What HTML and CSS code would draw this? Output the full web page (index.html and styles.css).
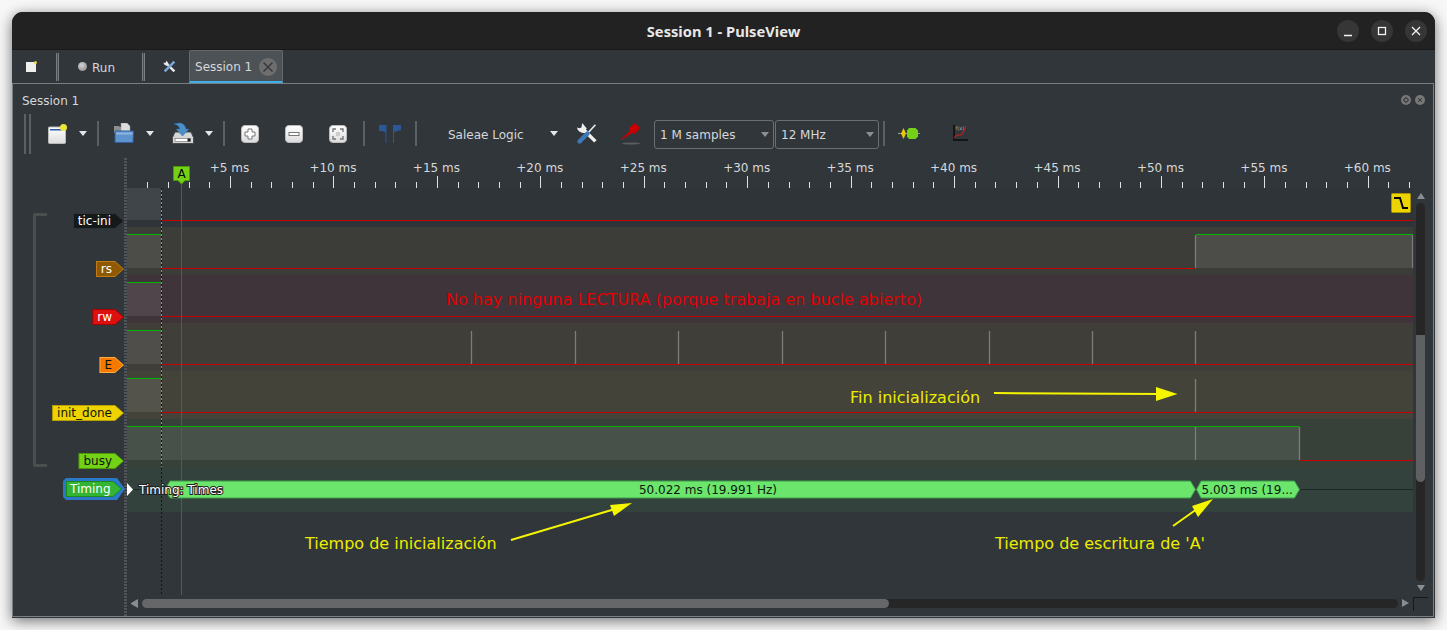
FILE: index.html
```html
<!DOCTYPE html>
<html lang="en">
<head>
<meta charset="utf-8">
<title>Session 1 - PulseView</title>
<link rel="stylesheet" href="styles.css">
</head>
<body>
<div class="window">
  <header class="titlebar">
    <h1 class="title">Session 1 - PulseView</h1>
    <div class="wm">
      <span class="wm-btn"><svg viewBox="0 0 22 22" width="22" height="22"><path d="M7 15.500h8" class="wm-ic"/></svg></span>
      <span class="wm-btn"><svg viewBox="0 0 22 22" width="22" height="22"><rect x="7.500" y="7.500" width="7" height="7" class="wm-ic"/></svg></span>
      <span class="wm-btn"><svg viewBox="0 0 22 22" width="22" height="22"><path d="M7 7l8 8M15 7l-8 8" class="wm-ic"/></svg></span>
    </div>
  </header>

  <nav class="tabbar">
    <svg class="t-stop" viewBox="0 0 11 11" width="11" height="11"><rect x="0" y="1" width="10" height="10" fill="#eeeeec"/><circle cx="9.500" cy="1.500" r="1.500" fill="#e9d84a"/></svg>
    <span class="handle t-h1"></span>
    <span class="run-dot"></span>
    <span class="run-label">Run</span>
    <span class="handle t-h2"></span>
    <svg class="t-tool" viewBox="0 0 24 24" width="13" height="13"><path d="M6 6L21 21" stroke="#e6e8ea" stroke-width="4.500" fill="none"/><path d="M1 5a6 6 0 0 0 8 5l1-4-4-5-1 4z" fill="#e6e8ea"/><path d="M21 3L3 21" stroke="#7aa7d8" stroke-width="4.500" fill="none"/></svg>
    <div class="tab">
      <span>Session 1</span>
      <svg class="tab-x" viewBox="0 0 18 18" width="18" height="18"><circle cx="9" cy="9" r="9" fill="#6e6e6e"/><path d="M4.500 4.500l9 9M13.500 4.500l-9 9" stroke="#34383c" stroke-width="1.500"/></svg>
    </div>
  </nav>

  <section class="dock">
    <div class="dock-title">
      <span>Session 1</span>
      <span class="dock-btns">
        <svg viewBox="0 0 10 10" width="10" height="10"><circle cx="5" cy="5" r="5" fill="#777"/><rect x="3.200" y="3.200" width="3.600" height="3.600" transform="rotate(45 5 5)" fill="none" stroke="#31363b"/></svg>
        <svg viewBox="0 0 10 10" width="10" height="10"><circle cx="5" cy="5" r="5" fill="#777"/><path d="M3 3l4 4M7 3l-4 4" stroke="#31363b"/></svg>
      </span>
    </div>

    <div class="toolbar">
      <span class="grip"></span>
      <svg class="i-new" viewBox="0 0 19 20" width="19" height="20"><defs><linearGradient id="pg" x1="0" y1="0" x2="0" y2="1"><stop offset="0" stop-color="#ffffff"/><stop offset="1" stop-color="#dcdcdc"/></linearGradient></defs><rect x="0.500" y="3" width="17" height="16.500" rx="1" fill="url(#pg)" stroke="#b9b9b9"/><rect x="2" y="5" width="12" height="1.500" fill="#2d5a9c"/><circle cx="15.500" cy="3.500" r="3.500" fill="#ece63a"/></svg>
      <span class="caret c1"></span>
      <span class="sep s1"></span>
      <svg class="i-open" viewBox="0 0 20 20" width="20" height="20"><path d="M0 3h5l1 1h8v6H0z" fill="#8c8f90"/><path d="M7 0h6l3 3v7H7z" fill="#dcdcdc" stroke="#999" stroke-width=".5"/><path d="M1 8h18.500l-.5 11.500H1z" fill="#5f93ce" stroke="#2d5f9e"/><path d="M2 9.500h16.500v2H2z" fill="#8db5e0"/></svg>
      <span class="caret c2"></span>
      <svg class="i-save" viewBox="0 0 22 22" width="22" height="22"><path d="M3 10h16l2.500 5.500v6H.5v-6z" fill="#d5d6d6" stroke="#4a4a4a"/><rect x="3" y="16.500" width="15.500" height="3" fill="#fff" stroke="#666" stroke-width=".6"/><rect x="15.500" y="16.500" width="3" height="3" fill="#222"/><path d="M2 2c6-2 11-1 12 5h3l-6.500 7L4 7h3.500c0-3-2.500-4-5.500-5z" fill="#4d90c8" stroke="#2b6aa0" stroke-width=".5"/></svg>
      <span class="caret c3"></span>
      <span class="sep s2"></span>
      <svg class="i-zi" viewBox="0 0 18 18" width="18" height="18"><rect x="0.500" y="0.500" width="17" height="17" rx="3.500" fill="url(#pg)" stroke="#bcbcbc"/><path d="M7 4h4v3h3v4h-3v3H7v-3H4V7h3z" fill="#fff" stroke="#777"/></svg>
      <svg class="i-zo" viewBox="0 0 18 18" width="18" height="18"><rect x="0.500" y="0.500" width="17" height="17" rx="3.500" fill="url(#pg)" stroke="#bcbcbc"/><rect x="4" y="7.500" width="10" height="3" fill="#fff" stroke="#777"/></svg>
      <svg class="i-fit" viewBox="0 0 18 18" width="18" height="18"><rect x="0.500" y="0.500" width="17" height="17" rx="3.500" fill="url(#pg)" stroke="#bcbcbc"/><path d="M4 7V4h3M11 4h3v3M14 11v3h-3M7 14H4v-3" fill="none" stroke="#777" stroke-width="1.400"/><rect x="7" y="7" width="4" height="4" fill="#ccc"/></svg>
      <span class="sep s3"></span>
      <svg class="i-flag" viewBox="0 0 22 18" width="22" height="18"><path d="M0 0h7.500v18h-1V7.500L3 6H0z" fill="#2b5797"/><path d="M14 0h8v5l-7 2v11h-1z" fill="#2b5797"/></svg>
      <span class="sep s4"></span>
      <span class="device">Saleae Logic</span>
      <span class="caret c4"></span>
      <svg class="i-tools" viewBox="0 0 24 24" width="21" height="21"><path d="M6 6L21 21" stroke="#eeeeec" stroke-width="4" fill="none"/><path d="M0 5a7 7 0 0 0 9 6l2-5-5-6-1 5-2 1z" fill="#eeeeec"/><path d="M21 2L12 12" stroke="#dfe6ee" stroke-width="2" fill="none"/><path d="M12 12L3 21" stroke="#3d78b6" stroke-width="5" stroke-linecap="round" fill="none"/></svg>
      <svg class="i-probe" viewBox="0 0 20 22" width="20" height="22"><path d="M0 16L9 8 8 5l6-5 5 5-5 6-3-1-11 7z" fill="#c80000"/><ellipse cx="10" cy="20.500" rx="9" ry="1" fill="#5a5d60"/></svg>
      <div class="combo c-samples"><span>1 M samples</span><i class="caret-dim"></i></div>
      <div class="combo c-rate"><span>12 MHz</span><i class="caret-dim"></i></div>
      <span class="sep s5"></span>
      <svg class="i-dec" viewBox="0 0 22 11" width="22" height="11"><path d="M0 5.500h22" stroke="#999"/><path d="M3 5.500L5.500 0 8 5.500 5.500 11z" fill="#e8c800"/><path d="M9 2.500L11 0h6.500L20 2.500v6L17.500 11H11L9 8.500z" fill="#73d216"/></svg>
      <svg class="i-math" viewBox="0 0 17 18" width="17" height="18"><path d="M3 0v15h14" fill="none" stroke="#141414" stroke-width="1.800"/><path d="M3 13c4-6 5-1 8-4s3-6 4-8" fill="none" stroke="#b82020" stroke-width="1.200"/><text class="math-txt" x="4.500" y="5">f(x)</text></svg>
    </div>

    <div class="view">
      <div class="headers">
        <div class="group">
          <div class="hrow r-first"><span class="tag tag-black">tic-ini</span></div>
          <div class="hrow"><span class="tag tag-brown">rs</span></div>
          <div class="hrow"><span class="tag tag-red">rw</span></div>
          <div class="hrow"><span class="tag tag-orange">E</span></div>
          <div class="hrow"><span class="tag tag-yellow">init_done</span></div>
          <div class="hrow"><span class="tag tag-green">busy</span></div>
        </div>
        <div class="hrow r-timing"><span class="timing-sel"><span class="tag tag-timing">Timing</span></span></div>
      </div>
      <div class="splitter"></div>
      <div class="main">
        <div class="ruler">
          <span class="tick-label">+5 ms</span><span class="tick-label">+10 ms</span><span class="tick-label">+15 ms</span><span class="tick-label">+20 ms</span><span class="tick-label">+25 ms</span><span class="tick-label">+30 ms</span><span class="tick-label">+35 ms</span><span class="tick-label">+40 ms</span><span class="tick-label">+45 ms</span><span class="tick-label">+50 ms</span><span class="tick-label">+55 ms</span><span class="tick-label">+60 ms</span>
        </div>
        <div class="viewport">
          <div class="lanes">
            <div class="lane l-first"></div>
            <div class="lane l-rs"></div>
            <div class="lane l-rw"></div>
            <div class="lane l-e"></div>
            <div class="lane l-init"></div>
            <div class="lane l-busy"></div>
            <div class="lane l-timing"></div>
          </div>
          <div class="vscroll">
            <i class="arr-up"></i>
            <div class="vgroove"><div class="vhandle"></div></div>
            <i class="arr-down"></i>
          </div>
        </div>
        <div class="hscroll">
          <i class="arr-left"></i>
          <div class="hgroove"><div class="hhandle"></div></div>
          <i class="arr-right"></i>
          <span class="corner"></span>
        </div>
        <svg class="overlay" viewBox="127 158 1306 440" width="1306" height="440">
          <path class="ticks" d="M147.500 182v6M168.500 182v6M189.500 182v6M209.500 182v6M230.500 176v12M251.500 182v6M271.500 182v6M292.500 182v6M313.500 182v6M333.500 176v12M354.500 182v6M375.500 182v6M395.500 182v6M416.500 182v6M437.500 176v12M458.500 182v6M478.500 182v6M499.500 182v6M520.500 182v6M540.500 176v12M561.500 182v6M582.500 182v6M602.500 182v6M623.500 182v6M644.500 176v12M664.500 182v6M685.500 182v6M706.500 182v6M726.500 182v6M747.500 176v12M768.500 182v6M789.500 182v6M809.500 182v6M830.500 182v6M851.500 176v12M871.500 182v6M892.500 182v6M913.500 182v6M933.500 182v6M954.500 176v12M975.500 182v6M995.500 182v6M1016.500 182v6M1037.500 182v6M1058.500 176v12M1078.500 182v6M1099.500 182v6M1120.500 182v6M1140.500 182v6M1161.500 176v12M1182.500 182v6M1202.500 182v6M1223.500 182v6M1244.500 182v6M1264.500 176v12M1285.500 182v6M1306.500 182v6M1326.500 182v6M1347.500 182v6M1368.500 176v12M1388.500 182v6M1409.500 182v6"/>

          <rect class="fill" x="127" y="188" width="34" height="32"/>
          <rect class="fill" x="127" y="235" width="34" height="33"/>
          <rect class="fill" x="127" y="283" width="34" height="33"/>
          <rect class="fill" x="127" y="331" width="34" height="33"/>
          <rect class="fill" x="127" y="379" width="34" height="33"/>
          <rect class="fill" x="127" y="427" width="1172.500" height="33"/>
          <rect class="fill" x="1196" y="235" width="217" height="33"/>

          <path class="low" d="M161 220.500H1413M161 268.500H1196M161 316.500H1413M161 364.500H1413M161 412.500H1413M1299 460.500H1413"/>
          <path class="high" d="M127 234.500H161M1196 234.500H1413M127 282.500H161M127 330.500H161M127 378.500H161M127 426.500H1299.500"/>
          <path class="edge" d="M1195.500 235v33M1412.500 235v33M471.500 331v33M575.500 331v33M678.500 331v33M782.500 331v33M885.500 331v33M989.500 331v33M1092.500 331v33M1195.500 331v33M1195.500 379v33M1195.500 427v33M1299.500 427v33"/>

          <path class="line-decode" d="M127 489.500H1413"/>
          <path class="cursor-gap" d="M161.500 188V467"/>
          <path class="cursor-b" d="M161.500 188V595"/>
          <path class="cursor-a" d="M181.500 182V595"/>

          <path class="bar" d="M170 481H1190.500L1195.500 489.500L1190.500 498H170L165 489.500Z"/>
          <path class="bar" d="M1201 481H1294.500L1299.500 489.500L1294.500 498H1201L1196.500 489.500Z"/>
          <path class="play" d="M127 483L133 489.500L127 496Z"/>
          <text class="halo" x="139" y="494">Timing: Times</text>
          <text class="bar-txt" x="708" y="494" text-anchor="middle">50.022 ms (19.991 Hz)</text>
          <text class="bar-txt" x="1201.500" y="494">5.003 ms (19...</text>

          <path class="flag" d="M173.500 166.500H189.500V180.500H185L181.500 184L178 180.500H173.500Z"/>
          <text class="flag-txt" x="181.500" y="178" text-anchor="middle">A</text>

          <rect class="trig" x="1391.500" y="193.500" width="19" height="19" rx="1"/>
          <path class="trig-ic" d="M1394 198H1400L1403 208H1408"/>

          <text class="note-red" x="446" y="305">No hay ninguna LECTURA (porque trabaja en bucle abierto)</text>
          <text class="note" x="850" y="403">Fin inicialización</text>
          <text class="note" x="305" y="549">Tiempo de inicialización</text>
          <text class="note" x="995" y="549">Tiempo de escritura de 'A'</text>

          <path class="arrow-line" d="M994 393L1160 394M511 540L615 509M1173 526L1197 509"/>
          <path class="arrow-head" d="M1177.500 394L1156 387V401Z"/>
          <path class="arrow-head" d="M632 503L610 505L614 516Z"/>
          <path class="arrow-head" d="M1213 499L1192 506L1198 517Z"/>
        </svg>
      </div>
    </div>
  </section>
</div>
</body>
</html>
```

FILE: styles.css
```css
* { box-sizing: border-box; }
html, body { margin: 0; height: 100%; }
body {
  background: #f7f7f7;
  padding: 12px 0 0 12px;
  overflow: hidden;
  font: 12px "DejaVu Sans", sans-serif;
  color: #d6d8d9;
}
.window {
  width: 1423px;
  height: 606px;
  background: #31363b;
  border-radius: 11px 11px 0 0;
  box-shadow: 0 3px 14px rgba(0,0,0,.55);
  display: flex;
  flex-direction: column;
  overflow: hidden;
}
.titlebar {
  height: 38px;
  flex: none;
  background: #222222;
  border-bottom: 1px solid #1a1a1a;
  display: flex;
  align-items: center;
  justify-content: center;
  position: relative;
}
.title {
  margin: 0;
  font: 700 14.700px "Noto Sans", sans-serif;
  color: #e8e8e8;
}
.wm {
  position: absolute;
  right: 8px;
  top: 8px;
  display: flex;
  gap: 12px;
}
.wm-btn {
  width: 22px;
  height: 22px;
  border-radius: 50%;
  background: #363636;
  display: block;
}
.wm-btn svg { display: block; }
.wm-ic { fill: none; stroke: #f2f2f2; stroke-width: 1.300; }

/* tab bar */
.tabbar {
  height: 33px;
  flex: none;
  display: flex;
  align-items: center;
  position: relative;
}
.t-stop { margin-left: 14px; margin-top: -1px; }
.handle {
  width: 3px;
  height: 28px;
  border: 1px solid #7b7e81;
  border-width: 0 1px;
  background: #4a4f53;
  flex: none;
}
.t-h1 { margin-left: 19px; }
.run-dot {
  width: 9px;
  height: 9px;
  border-radius: 50%;
  margin-left: 19px;
  background: radial-gradient(circle at 40% 35%, #d4d4d4, #808080);
}
.run-label { margin-left: 5px; padding-top: 2px; }
.t-h2 { margin-left: 27px; }
.t-tool { margin-left: 18px; }
.tab {
  margin-left: 13px;
  width: 94px;
  height: 33px;
  background: #4d5257;
  border: 1px solid #64686c;
  border-bottom: 2px solid #3daee9;
  border-radius: 2px 2px 0 0;
  display: flex;
  align-items: center;
  padding-left: 5px;
  justify-content: space-between;
  padding-right: 5px;
}
.tab > span { padding-top: 2px; }
.tab-x { display: block; margin-top: 1px; }

/* dock */
.dock {
  flex: 1;
  min-height: 0;
  border: 1px solid #7b7e81;
  margin: 0 1px 1px 0;
  display: flex;
  flex-direction: column;
}
.dock-title {
  height: 29px;
  flex: none;
  padding: 5px 8px 0 9px;
  display: flex;
  align-items: center;
  justify-content: space-between;
}
.dock-btns { display: flex; gap: 4px; margin-top: -2px; }
.dock-btns svg { display: block; }

.toolbar {
  height: 41px;
  flex: none;
  display: flex;
  align-items: center;
  margin-bottom: 4px;
}
.toolbar svg { flex: none; display: block; }
.grip {
  margin-left: 11px;
  width: 7px;
  height: 40px;
  border-left: 2px solid #5c6063;
  border-right: 2px solid #5c6063;
  flex: none;
}
.caret {
  width: 0;
  height: 0;
  border: 4px solid transparent;
  border-bottom: 0;
  border-top: 5px solid #e4e6e7;
  flex: none;
  margin-right: 1px;
}
.sep {
  width: 2px;
  height: 25px;
  background: #5c6063;
  flex: none;
}
.i-new { margin-left: 17px; }
.c1 { margin-left: 12px; }
.s1 { margin-left: 9px; }
.i-open { margin-left: 15px; margin-top: -2px; }
.c2 { margin-left: 12px; }
.i-save { margin-left: 17px; margin-top: -2px; }
.c3 { margin-left: 11px; }
.s2 { margin-left: 9px; }
.i-zi { margin-left: 16px; }
.i-zo, .i-fit { margin-left: 26px; }
.s3 { margin-left: 16px; }
.i-flag { margin-left: 14px; }
.s4 { margin-left: 14px; }
.device { margin-left: 31px; width: 76px; flex: none; white-space: nowrap; padding-top: 2px; }
.c4 { margin-left: 26px; }
.i-tools { margin-left: 18px; }
.i-probe { margin-left: 23px; }
.combo {
  height: 29px;
  margin-top: 1px;
  border: 1px solid #6b6f72;
  border-radius: 3px;
  display: flex;
  align-items: center;
  justify-content: space-between;
  padding: 0 4px 0 5px;
  flex: none;
}
.combo span { padding-top: 2px; }
.c-samples { width: 120px; margin-left: 13px; }
.c-rate { width: 104px; margin-left: 1px; }
.caret-dim {
  width: 0;
  height: 0;
  border: 4px solid transparent;
  border-bottom: 0;
  border-top: 5px solid #8d9093;
}
.s5 { margin-left: 4px; height: 25px; }
.i-dec { margin-left: 13px; }
.i-math { margin-left: 31px; }
.math-txt { font: 5px "DejaVu Sans", sans-serif; fill: #b0b0b0; }

/* view */
.view {
  flex: 1;
  min-height: 0;
  display: grid;
  grid-template-columns: 111px 3px 1fr;
}
.headers { padding-top: 30px; }
.group { position: relative; }
.group::before {
  content: "";
  position: absolute;
  left: 20px;
  top: 25px;
  bottom: 0;
  width: 11px;
  border: 3px solid #4b4e4f;
  border-right: 0;
  border-radius: 2px 0 0 2px;
}
.hrow {
  height: 48px;
  display: flex;
  justify-content: flex-end;
  align-items: flex-end;
}
.r-first { height: 39px; }
.r-timing { height: 45px; align-items: flex-start; padding-top: 11px; }
.tag {
  position: relative;
  height: 16px;
  margin-bottom: -2px;
  padding: 1px 12px 0 5px;
  line-height: 15px;
  font-size: 12px;
  color: #fff;
  z-index: 0;
  clip-path: polygon(0 0, calc(100% - 9px) 0, 100% 50%, calc(100% - 9px) 100%, 0 100%);
  background: var(--edge);
}
.tag::before {
  content: "";
  position: absolute;
  inset: 1px;
  z-index: -1;
  background: var(--face);
  clip-path: polygon(0 0, calc(100% - 8px) 0, 100% 50%, calc(100% - 8px) 100%, 0 100%);
}
.tag-black { --edge: #2e3436; --face: #16191a; padding-left: 5px; padding-right: 13px; }
.tag-brown { --edge: #c17d11; --face: #8f5902; }
.tag-red { --edge: #a40000; --face: #dd1010; }
.tag-orange { --edge: #fcaf3e; --face: #f57900; color: #111; }
.tag-yellow { --edge: #b8a000; --face: #edd400; color: #111; }
.tag-green { --edge: #4e9a06; --face: #73d216; color: #111; }
.tag-timing { --edge: #1e8a1e; --face: #33b533; display: block; margin: 0; padding: 1px 12px 0 4px; }
.timing-sel {
  display: block;
  width: 62px;
  height: 22px;
  padding: 3px;
  background: #2a78c8;
  clip-path: polygon(0 3px, 3px 0, calc(100% - 8px) 0, 100% 50%, calc(100% - 8px) 100%, 3px 100%, 0 calc(100% - 3px));
  margin-right: -1px;
}
.splitter {
  background: repeating-linear-gradient(#505458 0 2px, transparent 2px 3px);
}
.main {
  display: flex;
  flex-direction: column;
  position: relative;
  min-width: 0;
}
.ruler {
  height: 30px;
  flex: none;
  padding-left: 88.800px;
  padding-top: 3px;
  display: flex;
  align-items: flex-start;
}
.tick-label {
  width: 103.450px;
  flex: none;
  text-align: center;
  margin-left: -38px;
  margin-right: 38px;
  line-height: 14px;
}
.viewport { flex: none; height: 407px; display: flex; }
.lanes { flex: 1; min-width: 0; }
.lane { height: 48px; }
.l-first { height: 39px; background: #2f3438; }
.l-rs { background: #3c3c38; }
.l-rw { background: #3f3439; }
.l-e { background: #403e39; }
.l-init { background: #44433a; }
.l-busy { background: #374039; }
.l-timing { height: 45px; background: #33423c; }
.vscroll {
  width: 20px;
  flex: none;
  padding: 5px 8px 0 3px;
  display: flex;
  flex-direction: column;
  align-items: center;
}
.arr-up, .arr-down, .arr-left, .arr-right { display: block; width: 0; height: 0; flex: none; border: 4px solid transparent; }
.arr-up { border-top: 0; border-bottom: 6px solid #8a8d90; }
.arr-down { border-bottom: 0; border-top: 6px solid #8a8d90; margin-top: 4px; }
.vgroove {
  width: 9px;
  height: 378px;
  margin-top: 4px;
  border-radius: 5px;
  background: #262626;
  padding-top: 132px;
  flex: none;
}
.vhandle { height: 147px; border-radius: 0 0 5px 5px; background: #5f6062; }
.hscroll {
  flex: 1;
  display: flex;
  align-items: flex-start;
  padding-top: 4px;
  position: relative;
}
.arr-left { margin: 0 4px 0 4px; border-left: 0; border-right: 7px solid #8a8d90; height: 9px; }
.arr-right { margin-left: 4px; border-right: 0; border-left: 7px solid #8a8d90; }
.hgroove {
  width: 1256px;
  height: 9px;
  border-radius: 5px;
  background: #262626;
  flex: none;
}
.hhandle { width: 747px; height: 9px; border-radius: 5px; background: #666769; }
.corner {
  margin-left: 4px;
  margin-top: -2px;
  width: 15px;
  height: 14px;
  border-left: 1px solid #16181a;
  border-top: 1px solid #16181a;
  flex: none;
}
.overlay { position: absolute; left: 0; top: 0; pointer-events: none; }
.overlay text { font-family: "DejaVu Sans", sans-serif; }
.ticks { stroke: #dfe1e2; fill: none; }
.fill { fill: rgba(255,255,255,.085); }
.low { stroke: #c80000; fill: none; }
.high { stroke: #00b400; fill: none; }
.edge { stroke: #7c7d7a; stroke-width: 1.300; fill: none; }
.line-decode { stroke: #1f2a26; fill: none; }
.cursor-gap { stroke: #8c8f90; stroke-dasharray: 2 2; stroke-dashoffset: 2; fill: none; }
.cursor-b { stroke: #0000b4; stroke-dasharray: 2 2; fill: none; }
.cursor-a { stroke: #4a6a24; fill: none; }
.bar { fill: #6be56b; stroke: #3e9a4a; }
.play { fill: #fff; }
.halo { font-size: 12px; fill: #fff; paint-order: stroke; stroke: #222; stroke-width: 2px; }
.bar-txt { font-size: 12px; fill: #0c1a0c; }
.flag { fill: #73d216; stroke: #4e9a06; }
.flag-txt { font-size: 12px; fill: #000; }
.trig { fill: #edd400; stroke: #a89600; }
.trig-ic { fill: none; stroke: #000; stroke-width: 2; }
.note { font-size: 16px; fill: #ecec00; }
.note-red { font-size: 16px; fill: #e00000; }
.arrow-line { stroke: #f5f500; stroke-width: 2; fill: none; }
.arrow-head { fill: #f5f500; }
```
